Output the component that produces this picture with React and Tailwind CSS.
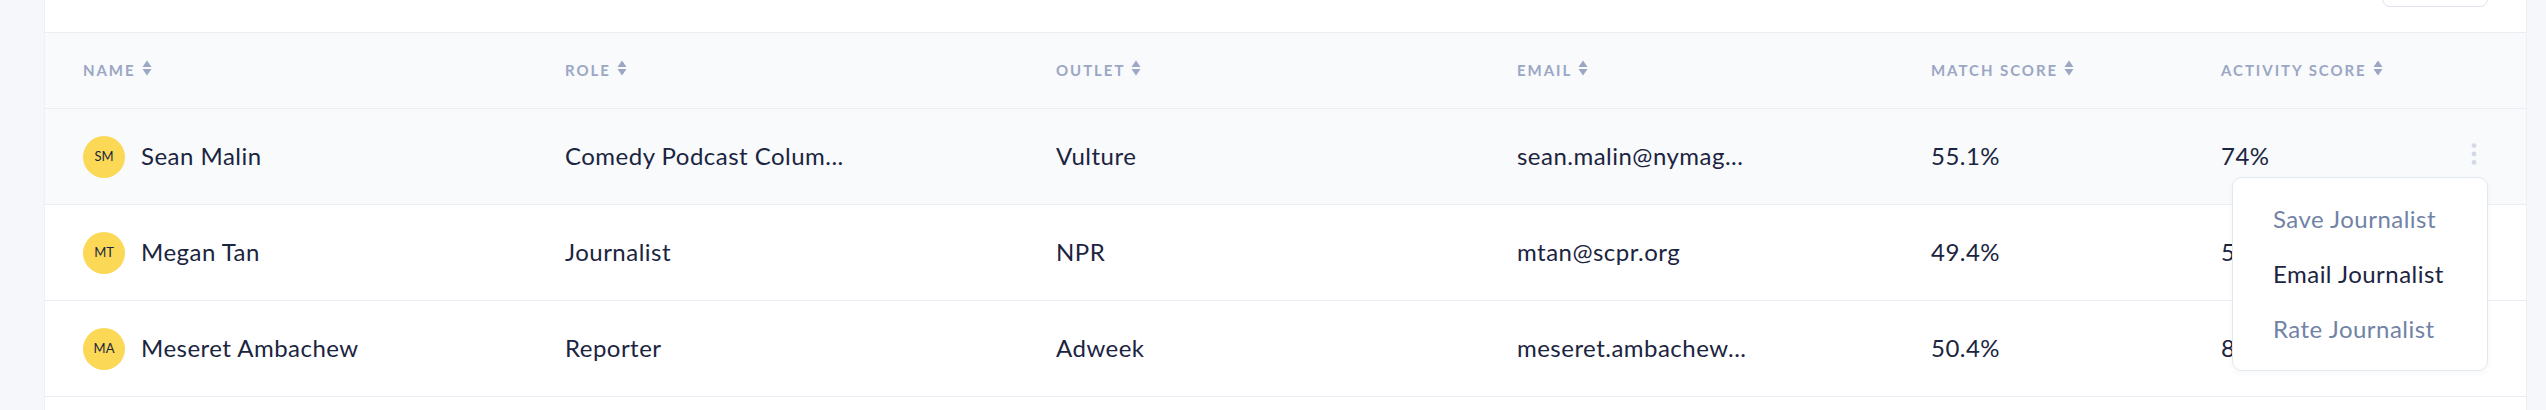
import React from "react";

const rows = [
  { initials: "SM", name: "Sean Malin", role: "Comedy Podcast Colum...", outlet: "Vulture", email: "sean.malin@nymag...", match: "55.1%", activity: "74%", active: true },
  { initials: "MT", name: "Megan Tan", role: "Journalist", outlet: "NPR", email: "mtan@scpr.org", match: "49.4%", activity: "58%" },
  { initials: "MA", name: "Meseret Ambachew", role: "Reporter", outlet: "Adweek", email: "meseret.ambachew...", match: "50.4%", activity: "81%" },
];

const headers = ["Name", "Role", "Outlet", "Email", "Match Score", "Activity Score"];

function SortIcon() {
  return (
    <svg width="10" height="16" viewBox="0 0 10 16" className="shrink-0 -mt-[5px]">
      <path d="M5 0.5 L9.5 7 L0.5 7 Z" fill="#9ba7c4" />
      <path d="M5 15.5 L9.5 9 L0.5 9 Z" fill="#9ba7c4" />
    </svg>
  );
}

function Kebab() {
  return (
    <svg width="6" height="23" viewBox="0 0 6 23" className="shrink-0 -mt-[2px]">
      <circle cx="3" cy="2.6" r="2.4" fill="#d3dae7" />
      <circle cx="3" cy="11" r="2.4" fill="#d3dae7" />
      <circle cx="3" cy="19.4" r="2.4" fill="#d3dae7" />
    </svg>
  );
}

const gridCols = "grid grid-cols-[482px_491px_461px_414px_290px_1fr] items-center";

export default function App() {
  return (
    <div className="min-h-[410px] bg-[#f5f7fa] pl-[44px] pr-[19px] font-[Lato,sans-serif] text-[#1b2440]">
      <div className="min-h-[410px] bg-white border-l border-r border-[#edf0f5]">
        <div className="h-[32px] flex justify-end items-end pr-[38px] pb-[25px] overflow-hidden">
          <div className="h-[40px] w-[106px] shrink-0 rounded-lg border border-[#dfe4ec] bg-white" />
        </div>
        <div className={`${gridCols} h-[77px] bg-[#f8fafc] border-t border-b border-[#e9edf4] pl-[38px] pr-[49px]`}>
          {headers.map((h) => (
            <div key={h} className="flex items-center gap-[6px]">
              <span className="text-[15px] font-bold uppercase tracking-[0.13em] text-[#9ba7c4]">{h}</span>
              <SortIcon />
            </div>
          ))}
        </div>
        {rows.map((r) => (
          <div
            key={r.name}
            className={`relative ${gridCols} h-[96px] border-b border-[#e9edf4] pl-[38px] pr-[49px] pb-[2px] text-[24px] tracking-[0.02em] ${r.active ? "bg-[#f8fafc]" : "bg-white"}`}
          >
            <div className="flex items-center gap-[16px]">
              <div className="w-[42px] h-[42px] mt-[2px] rounded-full bg-[#fbd957] flex items-center justify-center text-[13px] tracking-normal text-[#1b2440]">
                {r.initials}
              </div>
              <span>{r.name}</span>
            </div>
            <div>{r.role}</div>
            <div>{r.outlet}</div>
            <div>{r.email}</div>
            <div>{r.match}</div>
            <div className="flex items-center justify-between">
              <span>{r.activity}</span>
              {r.active && <Kebab />}
            </div>
            {r.active && (
              <div className="absolute right-[38px] top-[68px] z-10 w-[256px] h-[194px] rounded-[10px] border border-[#e3e7ee] bg-white shadow-[0_2px_6px_rgba(30,40,70,0.04)] flex flex-col justify-center gap-[33px] pl-[40px]">
                <div className="text-[#7183a5] leading-[22px]">Save Journalist</div>
                <div className="text-[#1b2440] leading-[22px]">Email Journalist</div>
                <div className="text-[#7183a5] leading-[22px]">Rate Journalist</div>
              </div>
            )}
          </div>
        ))}
      </div>
    </div>
  );
}
